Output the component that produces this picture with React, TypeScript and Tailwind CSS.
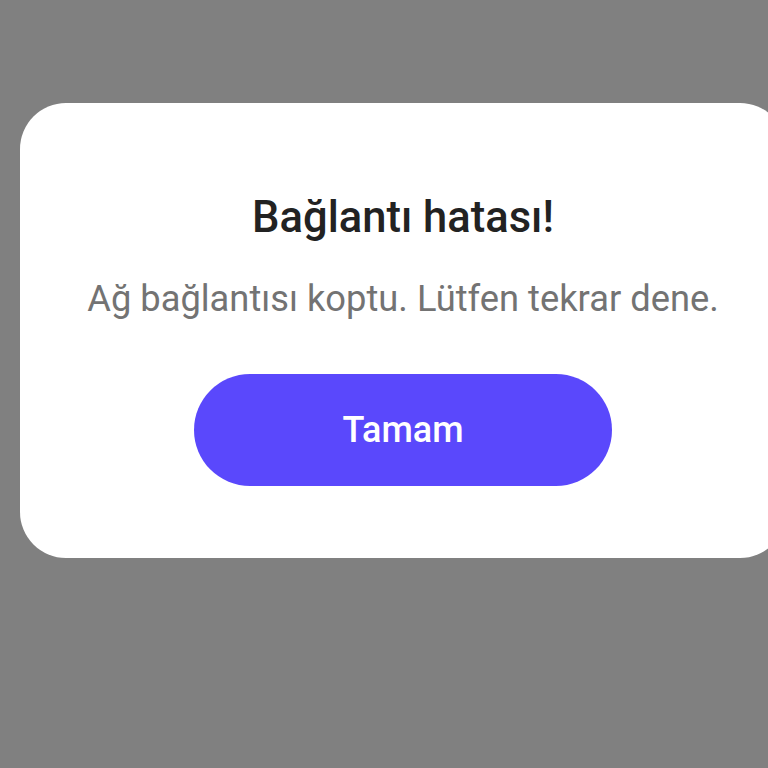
export default function App() {
  return (
    <div
      className="flex h-screen w-full overflow-hidden bg-[#808080] pl-[20px] pt-[103px]"
      style={{ fontFamily: "Roboto, 'Noto Sans', sans-serif" }}
    >
      <div className="flex h-fit w-[766px] shrink-0 flex-col items-center rounded-[46px] bg-white pb-[72px] pt-[93px]">
        <h1 className="text-[43.5px] font-medium leading-none text-[#222222]">Bağlantı hatası!</h1>
        <p className="mt-[41px] text-[36.3px] leading-none text-[#737373]">
          Ağ bağlantısı koptu. Lütfen tekrar dene.
        </p>
        <button className="mt-[57px] flex h-[112px] w-[418px] items-center justify-center rounded-full bg-[#5a48fc] text-[36px] font-medium leading-none text-white">
          Tamam
        </button>
      </div>
    </div>
  );
}
